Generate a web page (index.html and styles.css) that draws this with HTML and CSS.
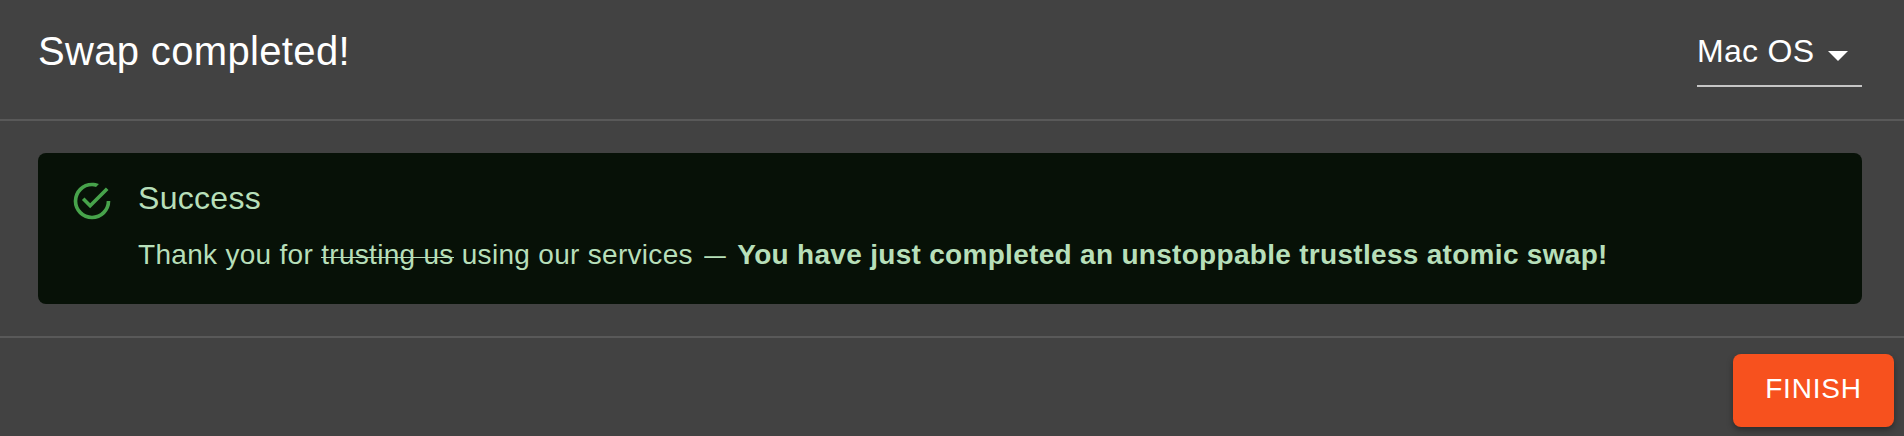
FILE: index.html
```html
<!DOCTYPE html>
<html lang="en">
<head>
<meta charset="utf-8">
<title>Swap completed</title>
<link rel="stylesheet" href="styles.css">
</head>
<body>
<main class="dialog">
<header class="dialog-title">
<h2 class="title">Swap completed!</h2>
<div class="select"><span class="select-text">Mac OS</span><svg class="select-arrow" viewBox="0 0 48 48"><path d="M14 20l10 10 10-10z"/></svg></div>
</header>
<section class="dialog-content">
<div class="alert">
<svg class="alert-icon" viewBox="0 0 24 24"><path d="M20,12A8,8 0 0,1 12,20A8,8 0 0,1 4,12A8,8 0 0,1 12,4C12.76,4 13.5,4.11 14.2,4.31L15.77,2.74C14.61,2.26 13.34,2 12,2A10,10 0 0,0 2,12A10,10 0 0,0 12,22A10,10 0 0,0 22,12M7.91,10.08L6.5,11.5L11,16L21,6L19.59,4.58L11,13.17L7.91,10.08Z"/></svg>
<div class="alert-message">
<div class="alert-title">Success</div>
<p class="alert-text">Thank you for <s class="struck">trusting us</s> using our services <span class="dash">—</span> <strong>You have just completed an unstoppable trustless atomic swap!</strong></p>
</div>
</div>
</section>
<footer class="dialog-actions"><button class="finish">FINISH</button></footer>
</main>
</body>
</html>
```
FILE: styles.css
```css
* { box-sizing: border-box; }
body { margin: 0; background: #424242; color: #fff; font-family: "Liberation Sans", Arial, sans-serif; }
.dialog { display: flex; flex-direction: column; height: 436px; overflow: hidden; }
.dialog-title { flex: none; display: flex; justify-content: space-between; height: 119px; padding: 22px 42px 0 38px; }
.title { margin: 0; font-size: 40px; font-weight: 400; line-height: 58px; letter-spacing: .34px; }
.select { display: flex; width: 165px; height: 65px; border-bottom: 2px solid #c6c6c6; font-size: 32px; line-height: 58px; letter-spacing: .3px; white-space: nowrap; }
.select-arrow { flex: none; width: 48px; height: 48px; margin: 9px 0 0 auto; fill: #fff; }
.dialog-content { flex: none; height: 219px; padding: 32px 42px 0 38px; border-top: 2px solid #595959; border-bottom: 2px solid #595959; }
.alert { display: flex; height: 151px; padding: 26px 32px; border-radius: 8px; background: #071107; color: #b7dfb9; }
.alert-icon { flex: none; width: 44px; height: 44px; fill: #47a34b; }
.alert-message { margin-left: 24px; white-space: nowrap; }
.alert-title { font-size: 32px; line-height: 38px; letter-spacing: .3px; }
.alert-text { margin: 18px 0 0; font-size: 28px; line-height: 40px; letter-spacing: .3px; }
.struck { text-decoration: none; background: linear-gradient(#b7dfb9, #b7dfb9) 0 18px / 100% 1px no-repeat; }
.dash { display: inline-block; transform: scaleX(.77); }
.dialog-actions { flex: none; display: flex; justify-content: flex-end; padding: 16px 10px 0; }
.finish { width: 161px; height: 73px; padding: 0 0 3px; border: 0; border-radius: 8px; background: #f7511e; color: #fff; font: 28px "Liberation Sans", Arial, sans-serif; letter-spacing: .8px; box-shadow: 0 3px 6px rgba(0,0,0,.35); }
```
